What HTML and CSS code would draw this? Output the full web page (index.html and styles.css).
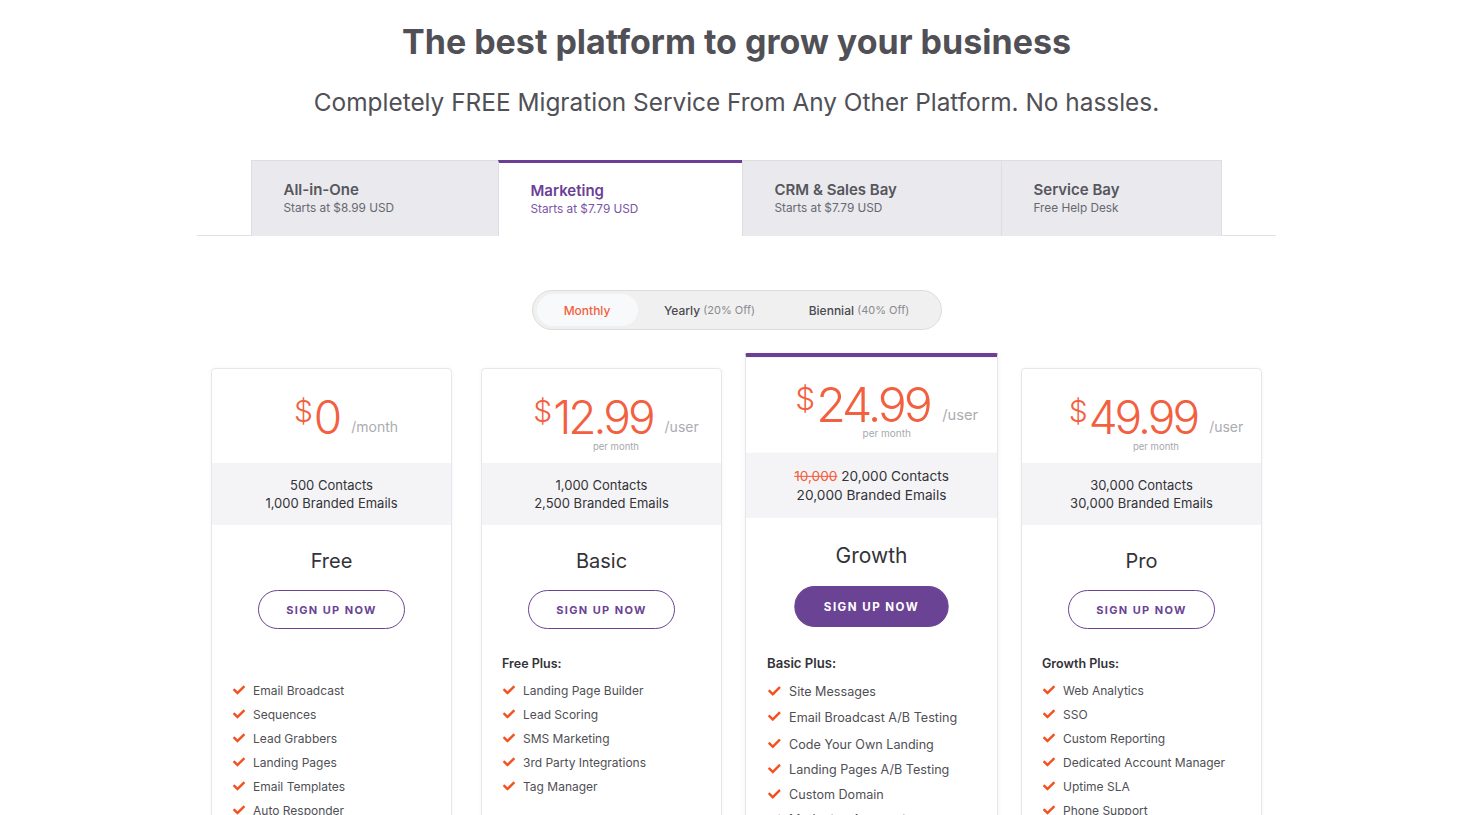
FILE: index.html
```html
<!DOCTYPE html>
<html lang="en">
<head>
<meta charset="utf-8">
<title>Pricing</title>
<link rel="stylesheet" href="styles.css">
</head>
<body>
<div class="page">
  <h1 class="title">The best platform to grow your business</h1>
  <p class="subtitle">Completely FREE Migration Service From Any Other Platform. No hassles.</p>

  <div class="tabs-bar">
    <div class="tabs">
      <div class="tab"><div class="tab-title">All-in-One</div><div class="tab-sub">Starts at $8.99 USD</div></div>
      <div class="tab tab-active"><div class="tab-title">Marketing</div><div class="tab-sub">Starts at $7.79 USD</div></div>
      <div class="tab"><div class="tab-title">CRM &amp; Sales Bay</div><div class="tab-sub">Starts at $7.79 USD</div></div>
      <div class="tab"><div class="tab-title">Service Bay</div><div class="tab-sub">Free Help Desk</div></div>
    </div>
  </div>

  <div class="toggle-wrap">
    <div class="toggle">
      <span class="opt opt-active">Monthly</span>
      <span class="opt">Yearly <span class="off">(20% Off)</span></span>
      <span class="opt">Biennial <span class="off">(40% Off)</span></span>
    </div>
  </div>

  <div class="cards">
    <!-- Free -->
    <div class="card">
      <div class="price-area">
        <div class="price-row"><span class="cur">$</span><span class="amount">0</span><span class="unit">/month</span></div>
      </div>
      <div class="limits"><div>500 Contacts</div><div>1,000 Branded Emails</div></div>
      <div class="plan-name">Free</div>
      <div class="btn-row"><a class="btn">SIGN UP NOW</a></div>
      <div class="feat-head">&nbsp;</div>
      <ul class="feats">
        <li><svg class="chk" viewBox="0 0 512 512"><path d="M173.9 439.4l-166.4-166.4c-10-10-10-26.2 0-36.2l36.2-36.2c10-10 26.2-10 36.2 0L192 312.7 432.1 72.6c10-10 26.2-10 36.2 0l36.2 36.2c10 10 10 26.2 0 36.2l-294.4 294.4c-10 10-26.2 10-36.2 0z"/></svg>Email Broadcast</li>
        <li><svg class="chk" viewBox="0 0 512 512"><path d="M173.9 439.4l-166.4-166.4c-10-10-10-26.2 0-36.2l36.2-36.2c10-10 26.2-10 36.2 0L192 312.7 432.1 72.6c10-10 26.2-10 36.2 0l36.2 36.2c10 10 10 26.2 0 36.2l-294.4 294.4c-10 10-26.2 10-36.2 0z"/></svg>Sequences</li>
        <li><svg class="chk" viewBox="0 0 512 512"><path d="M173.9 439.4l-166.4-166.4c-10-10-10-26.2 0-36.2l36.2-36.2c10-10 26.2-10 36.2 0L192 312.7 432.1 72.6c10-10 26.2-10 36.2 0l36.2 36.2c10 10 10 26.2 0 36.2l-294.4 294.4c-10 10-26.2 10-36.2 0z"/></svg>Lead Grabbers</li>
        <li><svg class="chk" viewBox="0 0 512 512"><path d="M173.9 439.4l-166.4-166.4c-10-10-10-26.2 0-36.2l36.2-36.2c10-10 26.2-10 36.2 0L192 312.7 432.1 72.6c10-10 26.2-10 36.2 0l36.2 36.2c10 10 10 26.2 0 36.2l-294.4 294.4c-10 10-26.2 10-36.2 0z"/></svg>Landing Pages</li>
        <li><svg class="chk" viewBox="0 0 512 512"><path d="M173.9 439.4l-166.4-166.4c-10-10-10-26.2 0-36.2l36.2-36.2c10-10 26.2-10 36.2 0L192 312.7 432.1 72.6c10-10 26.2-10 36.2 0l36.2 36.2c10 10 10 26.2 0 36.2l-294.4 294.4c-10 10-26.2 10-36.2 0z"/></svg>Email Templates</li>
        <li><svg class="chk" viewBox="0 0 512 512"><path d="M173.9 439.4l-166.4-166.4c-10-10-10-26.2 0-36.2l36.2-36.2c10-10 26.2-10 36.2 0L192 312.7 432.1 72.6c10-10 26.2-10 36.2 0l36.2 36.2c10 10 10 26.2 0 36.2l-294.4 294.4c-10 10-26.2 10-36.2 0z"/></svg>Auto Responder</li>
      </ul>
    </div>

    <!-- Basic -->
    <div class="card">
      <div class="price-area">
        <div class="price-row"><span class="cur">$</span><span class="amount">12.99</span><span class="unit">/user</span></div>
        <div class="per">per month</div>
      </div>
      <div class="limits"><div>1,000 Contacts</div><div>2,500 Branded Emails</div></div>
      <div class="plan-name">Basic</div>
      <div class="btn-row"><a class="btn">SIGN UP NOW</a></div>
      <div class="feat-head">Free Plus:</div>
      <ul class="feats">
        <li><svg class="chk" viewBox="0 0 512 512"><path d="M173.9 439.4l-166.4-166.4c-10-10-10-26.2 0-36.2l36.2-36.2c10-10 26.2-10 36.2 0L192 312.7 432.1 72.6c10-10 26.2-10 36.2 0l36.2 36.2c10 10 10 26.2 0 36.2l-294.4 294.4c-10 10-26.2 10-36.2 0z"/></svg>Landing Page Builder</li>
        <li><svg class="chk" viewBox="0 0 512 512"><path d="M173.9 439.4l-166.4-166.4c-10-10-10-26.2 0-36.2l36.2-36.2c10-10 26.2-10 36.2 0L192 312.7 432.1 72.6c10-10 26.2-10 36.2 0l36.2 36.2c10 10 10 26.2 0 36.2l-294.4 294.4c-10 10-26.2 10-36.2 0z"/></svg>Lead Scoring</li>
        <li><svg class="chk" viewBox="0 0 512 512"><path d="M173.9 439.4l-166.4-166.4c-10-10-10-26.2 0-36.2l36.2-36.2c10-10 26.2-10 36.2 0L192 312.7 432.1 72.6c10-10 26.2-10 36.2 0l36.2 36.2c10 10 10 26.2 0 36.2l-294.4 294.4c-10 10-26.2 10-36.2 0z"/></svg>SMS Marketing</li>
        <li><svg class="chk" viewBox="0 0 512 512"><path d="M173.9 439.4l-166.4-166.4c-10-10-10-26.2 0-36.2l36.2-36.2c10-10 26.2-10 36.2 0L192 312.7 432.1 72.6c10-10 26.2-10 36.2 0l36.2 36.2c10 10 10 26.2 0 36.2l-294.4 294.4c-10 10-26.2 10-36.2 0z"/></svg>3rd Party Integrations</li>
        <li><svg class="chk" viewBox="0 0 512 512"><path d="M173.9 439.4l-166.4-166.4c-10-10-10-26.2 0-36.2l36.2-36.2c10-10 26.2-10 36.2 0L192 312.7 432.1 72.6c10-10 26.2-10 36.2 0l36.2 36.2c10 10 10 26.2 0 36.2l-294.4 294.4c-10 10-26.2 10-36.2 0z"/></svg>Tag Manager</li>
      </ul>
    </div>

    <!-- Growth -->
    <div class="card card-featured">
      <div class="price-area">
        <div class="price-row"><span class="cur">$</span><span class="amount">24.99</span><span class="unit">/user</span></div>
        <div class="per">per month</div>
      </div>
      <div class="limits"><div><s class="old">10,000</s> 20,000 Contacts</div><div>20,000 Branded Emails</div></div>
      <div class="plan-name">Growth</div>
      <div class="btn-row"><a class="btn btn-solid">SIGN UP NOW</a></div>
      <div class="feat-head">Basic Plus:</div>
      <ul class="feats">
        <li><svg class="chk" viewBox="0 0 512 512"><path d="M173.9 439.4l-166.4-166.4c-10-10-10-26.2 0-36.2l36.2-36.2c10-10 26.2-10 36.2 0L192 312.7 432.1 72.6c10-10 26.2-10 36.2 0l36.2 36.2c10 10 10 26.2 0 36.2l-294.4 294.4c-10 10-26.2 10-36.2 0z"/></svg>Site Messages</li>
        <li><svg class="chk" viewBox="0 0 512 512"><path d="M173.9 439.4l-166.4-166.4c-10-10-10-26.2 0-36.2l36.2-36.2c10-10 26.2-10 36.2 0L192 312.7 432.1 72.6c10-10 26.2-10 36.2 0l36.2 36.2c10 10 10 26.2 0 36.2l-294.4 294.4c-10 10-26.2 10-36.2 0z"/></svg>Email Broadcast A/B Testing</li>
        <li class="feat-tall"><svg class="chk" viewBox="0 0 512 512"><path d="M173.9 439.4l-166.4-166.4c-10-10-10-26.2 0-36.2l36.2-36.2c10-10 26.2-10 36.2 0L192 312.7 432.1 72.6c10-10 26.2-10 36.2 0l36.2 36.2c10 10 10 26.2 0 36.2l-294.4 294.4c-10 10-26.2 10-36.2 0z"/></svg>Code Your Own Landing</li>
        <li><svg class="chk" viewBox="0 0 512 512"><path d="M173.9 439.4l-166.4-166.4c-10-10-10-26.2 0-36.2l36.2-36.2c10-10 26.2-10 36.2 0L192 312.7 432.1 72.6c10-10 26.2-10 36.2 0l36.2 36.2c10 10 10 26.2 0 36.2l-294.4 294.4c-10 10-26.2 10-36.2 0z"/></svg>Landing Pages A/B Testing</li>
        <li><svg class="chk" viewBox="0 0 512 512"><path d="M173.9 439.4l-166.4-166.4c-10-10-10-26.2 0-36.2l36.2-36.2c10-10 26.2-10 36.2 0L192 312.7 432.1 72.6c10-10 26.2-10 36.2 0l36.2 36.2c10 10 10 26.2 0 36.2l-294.4 294.4c-10 10-26.2 10-36.2 0z"/></svg>Custom Domain</li>
        <li><svg class="chk" viewBox="0 0 512 512"><path d="M173.9 439.4l-166.4-166.4c-10-10-10-26.2 0-36.2l36.2-36.2c10-10 26.2-10 36.2 0L192 312.7 432.1 72.6c10-10 26.2-10 36.2 0l36.2 36.2c10 10 10 26.2 0 36.2l-294.4 294.4c-10 10-26.2 10-36.2 0z"/></svg>Marketing Automation</li>
      </ul>
    </div>

    <!-- Pro -->
    <div class="card">
      <div class="price-area">
        <div class="price-row"><span class="cur">$</span><span class="amount">49.99</span><span class="unit">/user</span></div>
        <div class="per">per month</div>
      </div>
      <div class="limits"><div>30,000 Contacts</div><div>30,000 Branded Emails</div></div>
      <div class="plan-name">Pro</div>
      <div class="btn-row"><a class="btn">SIGN UP NOW</a></div>
      <div class="feat-head">Growth Plus:</div>
      <ul class="feats">
        <li><svg class="chk" viewBox="0 0 512 512"><path d="M173.9 439.4l-166.4-166.4c-10-10-10-26.2 0-36.2l36.2-36.2c10-10 26.2-10 36.2 0L192 312.7 432.1 72.6c10-10 26.2-10 36.2 0l36.2 36.2c10 10 10 26.2 0 36.2l-294.4 294.4c-10 10-26.2 10-36.2 0z"/></svg>Web Analytics</li>
        <li><svg class="chk" viewBox="0 0 512 512"><path d="M173.9 439.4l-166.4-166.4c-10-10-10-26.2 0-36.2l36.2-36.2c10-10 26.2-10 36.2 0L192 312.7 432.1 72.6c10-10 26.2-10 36.2 0l36.2 36.2c10 10 10 26.2 0 36.2l-294.4 294.4c-10 10-26.2 10-36.2 0z"/></svg>SSO</li>
        <li><svg class="chk" viewBox="0 0 512 512"><path d="M173.9 439.4l-166.4-166.4c-10-10-10-26.2 0-36.2l36.2-36.2c10-10 26.2-10 36.2 0L192 312.7 432.1 72.6c10-10 26.2-10 36.2 0l36.2 36.2c10 10 10 26.2 0 36.2l-294.4 294.4c-10 10-26.2 10-36.2 0z"/></svg>Custom Reporting</li>
        <li><svg class="chk" viewBox="0 0 512 512"><path d="M173.9 439.4l-166.4-166.4c-10-10-10-26.2 0-36.2l36.2-36.2c10-10 26.2-10 36.2 0L192 312.7 432.1 72.6c10-10 26.2-10 36.2 0l36.2 36.2c10 10 10 26.2 0 36.2l-294.4 294.4c-10 10-26.2 10-36.2 0z"/></svg>Dedicated Account Manager</li>
        <li><svg class="chk" viewBox="0 0 512 512"><path d="M173.9 439.4l-166.4-166.4c-10-10-10-26.2 0-36.2l36.2-36.2c10-10 26.2-10 36.2 0L192 312.7 432.1 72.6c10-10 26.2-10 36.2 0l36.2 36.2c10 10 10 26.2 0 36.2l-294.4 294.4c-10 10-26.2 10-36.2 0z"/></svg>Uptime SLA</li>
        <li><svg class="chk" viewBox="0 0 512 512"><path d="M173.9 439.4l-166.4-166.4c-10-10-10-26.2 0-36.2l36.2-36.2c10-10 26.2-10 36.2 0L192 312.7 432.1 72.6c10-10 26.2-10 36.2 0l36.2 36.2c10 10 10 26.2 0 36.2l-294.4 294.4c-10 10-26.2 10-36.2 0z"/></svg>Phone Support</li>
      </ul>
    </div>
  </div>
</div>
</body>
</html>
```

FILE: styles.css
```css
html, body {
  margin: 0;
  padding: 0;
  height: 100%;
  overflow: hidden;
  background: #ffffff;
}

body {
  font-family: Inter, "Open Sans", "DejaVu Sans", sans-serif;
  color: #4f4f55;
}

.page {
  padding-left: 8px;
  box-sizing: border-box;
  width: 100%;
}

.title {
  margin: 0;
  padding-top: 20px;
  text-align: center;
  font-size: 34px;
  line-height: 44px;
  font-weight: 700;
  letter-spacing: 0;
  color: #505056;
}

.subtitle {
  margin: 22px 0 0;
  text-align: center;
  font-size: 24.4px;
  line-height: 32px;
  font-weight: 400;
  color: #505056;
}

/* Tabs */
.tabs-bar {
  width: 1079px;
  margin: 42px auto 0;
  border-bottom: 1px solid #e2e2e6;
  display: flex;
  justify-content: center;
}

.tabs {
  display: grid;
  grid-template-columns: 247px 244px 259px 221px;
  margin-left: -1px;
}

.tab {
  height: 76px;
  box-sizing: border-box;
  background: #e9e9ee;
  border: 1px solid #dedde2;
  border-right: none;
  border-bottom: none;
  padding: 18px 20px 0 32px;
  margin-bottom: -1px;
}

.tab:last-child {
  border-right: 1px solid #dedde2;
}

.tab-title {
  font-size: 15px;
  line-height: 21px;
  font-weight: 600;
  color: #56565c;
}

.tab-sub {
  font-size: 11.8px;
  line-height: 17px;
  color: #68686e;
}

.tab-active {
  background: #ffffff;
  border-top: 3px solid #6b3f96;
  padding-top: 17px;
}

.tab-active .tab-title {
  color: #6b3f96;
}

.tab-active .tab-sub {
  color: #7b54a6;
}

/* Toggle */
.toggle-wrap {
  display: flex;
  justify-content: center;
  margin-top: 54px;
}

.toggle {
  display: flex;
  border: 1px solid #dcdcdc;
  background: #f0f0f0;
  border-radius: 21px;
  padding: 3px 4px;
}

.opt {
  height: 32px;
  display: flex;
  align-items: center;
  justify-content: center;
  box-sizing: border-box;
  font-size: 12px;
  font-weight: 500;
  color: #4a4a50;
  white-space: pre;
}

.opt:nth-child(1) { width: 101px; }
.opt:nth-child(2) { width: 144px; }
.opt:nth-child(3) { width: 155px; }

.opt-active {
  background: #f8f9fa;
  border-radius: 16px;
  color: #f2603f;
}

.off {
  font-size: 11px;
  color: #8a8a8e;
  font-weight: 400;
}

/* Cards */
.cards {
  display: grid;
  grid-template-columns: repeat(4, 241px);
  column-gap: 29px;
  justify-content: center;
  margin-top: 38px;
}

.card {
  background: #ffffff;
  border: 1px solid #e7e7eb;
  border-radius: 4px;
  box-shadow: 0 0 5px rgba(0, 0, 0, 0.04);
  height: 640px;
  box-sizing: border-box;
}

.card-featured {
  border-top: 4px solid #6b3f96;
  border-radius: 2px 2px 4px 4px;
  transform-origin: center top;
  transform: translateY(-15px) scale(1.05);
  position: relative;
  z-index: 1;
}

.price-area {
  height: 94px;
  box-sizing: border-box;
  padding: 30px 0 0 29px;
  display: flex;
  flex-direction: column;
  align-items: center;
}

.card-featured .price-area {
  height: 91px;
  padding-top: 27px;
}

.price-row {
  display: flex;
  align-items: flex-start;
  color: #f2603f;
  height: 38px;
}

.cur {
  font-size: 30px;
  line-height: 30px;
  font-weight: 300;
  margin-top: -3px;
  margin-right: 1px;
}

.amount {
  font-size: 46px;
  line-height: 36px;
  font-weight: 300;
  letter-spacing: -3px;
}

.unit {
  font-size: 14px;
  line-height: 18px;
  color: #acacb0;
  align-self: flex-end;
  margin-left: 12px;
  margin-bottom: 1px;
}

.per {
  font-size: 9.5px;
  line-height: 12px;
  color: #a8a8ac;
  margin-top: 4px;
}

.card-featured .per {
  margin-top: 2px;
}

.limits {
  height: 62px;
  background: #f4f4f6;
  display: flex;
  flex-direction: column;
  justify-content: center;
  align-items: center;
  font-size: 13px;
  line-height: 18px;
  color: #333338;
}

.old {
  color: #f2603f;
}

.plan-name {
  margin-top: 23px;
  text-align: center;
  font-size: 20px;
  line-height: 26px;
  font-weight: 400;
  color: #333338;
}

.btn-row {
  display: flex;
  justify-content: center;
  margin-top: 16px;
}

.btn {
  width: 147px;
  height: 39px;
  box-sizing: border-box;
  border: 1px solid #6b4394;
  border-radius: 20px;
  display: flex;
  align-items: center;
  justify-content: center;
  font-size: 11px;
  font-weight: 700;
  letter-spacing: 1.4px;
  color: #6b4394;
}

.btn-solid {
  background: #6b4394;
  color: #ffffff;
}

.feat-head {
  margin-top: 26px;
  padding-left: 20px;
  font-size: 12.5px;
  line-height: 18px;
  font-weight: 600;
  color: #333338;
}

.feats {
  list-style: none;
  margin: 5px 0 0;
  padding: 0 0 0 20px;
}

.feats li {
  display: flex;
  align-items: center;
  height: 24px;
  font-size: 12px;
  color: #4f4f55;
}

.feats .feat-tall {
  height: 26px;
  padding-top: 2px;
  box-sizing: border-box;
}

.chk {
  width: 14px;
  height: 12px;
  fill: #f4511e;
  margin-right: 7px;
  flex: none;
}
```
